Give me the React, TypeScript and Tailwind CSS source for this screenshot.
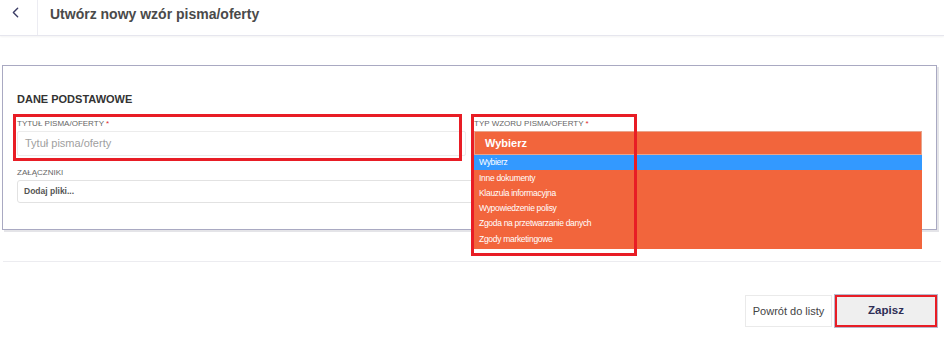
import { ChevronLeft } from "lucide-react";

const options = [
  "Wybierz",
  "Inne dokumenty",
  "Klauzula informacyjna",
  "Wypowiedzenie polisy",
  "Zgoda na przetwarzanie danych",
  "Zgody marketingowe",
];

const App = () => {
  return (
    <div className="w-[944px] h-[339px] bg-white font-['Liberation_Sans',Arial,sans-serif] overflow-hidden">
      {/* header */}
      <div className="flex h-[36px] border-b border-[#e6e6ee] shadow-[0_1px_2px_rgba(0,0,0,0.05)]">
        <div className="w-[38px] flex items-start pl-[7px] pt-[4px] border-r border-[#ececf2]">
          <ChevronLeft className="w-[17px] h-[17px] text-[#3c3d66]" strokeWidth={2} />
        </div>
        <h1 className="pl-[12px] pt-[4px] text-[14px] font-bold text-[#4a4a4a]">
          Utwórz nowy wzór pisma/oferty
        </h1>
      </div>

      {/* card */}
      <div className="relative mt-[29px] ml-[2px] w-[935px] h-[165px] border border-[#a9a9c2] shadow-[2px_2px_0_#e4e4e8] px-[14px] pt-[26px]">
        <h2 className="text-[11px] font-bold text-[#333] leading-[14px]">DANE PODSTAWOWE</h2>

        <div className="flex gap-[8px] mt-[13px]">
          <div className="w-[449px]">
            <label className="block text-[8px] text-[#666] leading-[10px] uppercase">
              Tytuł pisma/oferty <span className="text-[#e0282e]">*</span>
            </label>
            <div className="mt-[2px] h-[25px] border border-[#ececec] rounded-[2px] px-[7px] flex items-center text-[11px] text-[#a0a0a0]">
              Tytuł pisma/oferty
            </div>
            <label className="block mt-[12px] text-[8px] text-[#666] leading-[10px]">ZAŁĄCZNIKI</label>
            <div className="mt-[2px] h-[23px] w-[470px] border border-[#e2e2e2] rounded-[3px] px-[6px] flex items-center text-[8.5px] font-bold text-[#555] bg-white">
              Dodaj pliki...
            </div>
          </div>

          <div className="relative w-[448px] z-10">
            <label className="block text-[8px] text-[#666] leading-[10px] uppercase">
              Typ wzoru pisma/oferty <span className="text-[#e0282e]">*</span>
            </label>
            <div className="mt-[2px] h-[24px] bg-[#f2653c] border border-[#e8a48c] px-[10px] flex items-center text-[11px] font-bold text-white">
              Wybierz
            </div>
            <ul className="absolute left-0 top-[36px] w-[448px] bg-[#f2653c] pb-[2px]">
              {options.map((o, i) => (
                <li
                  key={o}
                  className={`h-[15.3px] pl-[5px] flex items-center text-[8.5px] text-white tracking-[-0.3px] ${
                    i === 0 ? "bg-[#3399ff]" : ""
                  }`}
                >
                  {o}
                </li>
              ))}
            </ul>
          </div>
        </div>

        {/* annotation boxes */}
        <div className="absolute left-[10px] top-[48px] w-[449px] h-[47px] border-[3px] border-[#e81d25] pointer-events-none" />
        <div className="absolute left-[468px] top-[48px] w-[166px] h-[142px] border-[3px] border-[#e81d25] pointer-events-none z-20" />
      </div>

      <div className="mt-[31px] mx-[3px] border-t border-[#ececf0]" />

      {/* actions */}
      <div className="flex justify-end gap-[3px] mt-[33px] pr-[7px]">
        <button className="h-[32px] w-[87px] border border-[#eaeaea] bg-white text-[11px] text-[#444]">
          Powrót do listy
        </button>
        <button className="h-[32px] w-[102px] border-2 border-[#e81d25] bg-[#efefef] text-[11.5px] font-bold text-[#2e2e55] outline outline-1 outline-[#b8b8cc]">
          Zapisz
        </button>
      </div>
    </div>
  );
};

export default App;
